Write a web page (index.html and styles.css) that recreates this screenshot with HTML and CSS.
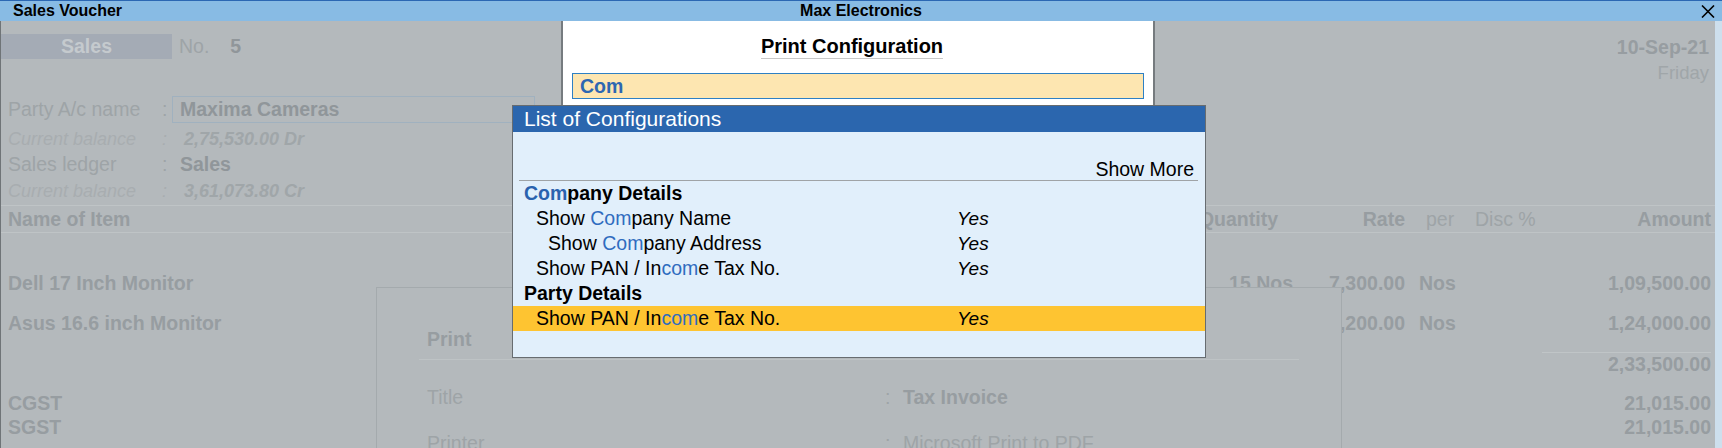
FILE: index.html
```html
<!DOCTYPE html>
<html lang="en">

<head>
    <meta charset="UTF-8">
    <meta name="viewport" content="width=device-width, initial-scale=1.0">
    <title>Sales Voucher</title>
    <link rel="stylesheet" href="styles.css">
</head>

<body>
    <div class="titlebar">
        <div class="title-left">Sales Voucher</div>
        <div class="title-center">Max Electronics</div>
        <div class="title-right">
            <svg class="close-icon" width="14" height="13" viewBox="0 0 14 13">
                <path d="M1 0.5 L13 12.5 M13 0.5 L1 12.5" stroke="#000" stroke-width="1.6" fill="none"/>
            </svg>
        </div>
    </div>

    <div class="screen">
        <div class="voucher">
            <div class="vch-top">
                <div class="vch-left">
                    <div class="vch-type">Sales</div>
                    <span class="vch-no-label">No.</span>
                    <span class="vch-no">5</span>
                </div>
                <div class="vch-date">
                    <div class="date">10-Sep-21</div>
                    <div class="day">Friday</div>
                </div>
            </div>

            <div class="ledgers">
                <div class="led-row row-party">
                    <span class="label">Party A/c name</span>
                    <span class="colon">:</span>
                    <span class="party-field">Maxima Cameras</span>
                </div>
                <div class="led-row row-bal">
                    <span class="label">Current balance</span>
                    <span class="colon">:</span>
                    <span class="bal-value">2,75,530.00 Dr</span>
                </div>
                <div class="led-row row-ledger">
                    <span class="label">Sales ledger</span>
                    <span class="colon">:</span>
                    <span class="value">Sales</span>
                </div>
                <div class="led-row row-bal2">
                    <span class="label">Current balance</span>
                    <span class="colon">:</span>
                    <span class="bal-value">3,61,073.80 Cr</span>
                </div>
            </div>

            <div class="items-head">
                <span class="col-name">Name of Item</span>
                <span class="col-qty">Quantity</span>
                <span class="col-rate">Rate</span>
                <span class="col-per">per</span>
                <span class="col-disc">Disc %</span>
                <span class="col-amt">Amount</span>
            </div>

            <div class="items">
                <div class="item-row">
                    <span class="col-name">Dell 17 Inch Monitor</span>
                    <span class="col-qty">15 Nos</span>
                    <span class="col-rate">7,300.00</span>
                    <span class="col-per">Nos</span>
                    <span class="col-disc"></span>
                    <span class="col-amt">1,09,500.00</span>
                </div>
                <div class="item-row">
                    <span class="col-name">Asus 16.6 inch Monitor</span>
                    <span class="col-qty">20 Nos</span>
                    <span class="col-rate">6,200.00</span>
                    <span class="col-per">Nos</span>
                    <span class="col-disc"></span>
                    <span class="col-amt">1,24,000.00</span>
                </div>
            </div>

            <div class="subtotal">2,33,500.00</div>

            <div class="taxes">
                <div class="tax-row">
                    <span>CGST</span>
                    <span>21,015.00</span>
                </div>
                <div class="tax-row">
                    <span>SGST</span>
                    <span>21,015.00</span>
                </div>
            </div>
        </div>
        <div class="side-strip"></div>

        <!-- print dialog behind the configuration popups -->
        <div class="print-dialog">
            <div class="pd-head">Print</div>
            <div class="pd-row pd-first">
                <span class="pd-label">Title</span>
                <span class="pd-colon">:</span>
                <span class="pd-value bold">Tax Invoice</span>
            </div>
            <div class="pd-row">
                <span class="pd-label">Printer</span>
                <span class="pd-colon">:</span>
                <span class="pd-value">Microsoft Print to PDF</span>
            </div>
        </div>

        <div class="config-panel">
            <div class="config-title"><span>Print Configuration</span></div>
            <div class="config-input">Com</div>
        </div>

        <div class="config-list">
            <div class="list-header">List of Configurations</div>
            <div class="list-body">
                <div class="show-more">Show More</div>
                <div class="list-row group"><span class="name"><b class="match">Com</b>pany Details</span><span></span></div>
                <div class="list-row lvl1"><span class="name">Show <span class="match">Com</span>pany Name</span><span class="yes">Yes</span></div>
                <div class="list-row lvl2"><span class="name">Show <span class="match">Com</span>pany Address</span><span class="yes">Yes</span></div>
                <div class="list-row lvl1"><span class="name">Show PAN / In<span class="match">com</span>e Tax No.</span><span class="yes">Yes</span></div>
                <div class="list-row group"><span class="name">Party Details</span><span></span></div>
                <div class="list-row lvl1 selected"><span class="name">Show PAN / In<span class="match">com</span>e Tax No.</span><span class="yes">Yes</span></div>
            </div>
        </div>
    </div>
</body>
</html>
```

FILE: styles.css
```css
:root {
    --screen-bg: #b4b9bc;
    --title-bg: #88bbe4;
    --title-border: #2b67b3;
    --faded-label: #9ea4a7;
    --faded-value: #90969a;
    --faded-italic: #a8adb0;
    --list-head: #2b66ae;
    --list-bg: #e1effb;
    --select-bg: #fec431;
    --match-blue: #2f6cbf;
}

* {
    box-sizing: border-box;
    margin: 0;
    padding: 0;
}

body {
    width: 1722px;
    height: 448px;
    overflow: hidden;
    font-family: "Liberation Sans", Arial, sans-serif;
    font-size: 19.5px;
    color: #000;
    background-color: var(--screen-bg);
}

/* title bar */
.titlebar {
    height: 21px;
    border-top: 1px solid var(--title-border);
    background-color: var(--title-bg);
    display: grid;
    grid-template-columns: 1fr auto 1fr;
    align-items: center;
    font-size: 16px;
    font-weight: bold;
    line-height: 20px;
}

.title-left {
    padding-left: 13px;
}

.title-center {
    text-align: center;
}

.title-right {
    display: flex;
    justify-content: flex-end;
    padding-right: 7px;
}

.close-icon {
    display: block;
}

/* main screen */
.screen {
    position: relative;
    height: 427px;
    display: flex;
    overflow: hidden;
}

.voucher {
    flex: 1;
    border-left: 1px solid #6f7477;
    padding-top: 13px;
    color: var(--faded-label);
}

.side-strip {
    width: 7px;
    background-color: #cddfed;
}

.vch-top {
    height: 62px;
    display: flex;
    justify-content: space-between;
    align-items: flex-start;
}

.vch-left {
    display: flex;
    align-items: center;
    height: 25px;
    line-height: 25px;
}

.vch-type {
    width: 171px;
    height: 25px;
    background-color: #a4abb5;
    color: #c5cace;
    font-weight: bold;
    text-align: center;
}

.vch-no-label {
    margin-left: 7px;
}

.vch-no {
    margin-left: 21px;
    font-weight: bold;
    color: var(--faded-value);
}

.vch-date {
    margin-right: 6px;
    text-align: right;
    line-height: 26px;
}

.date {
    font-weight: bold;
    color: #979da1;
}

.day {
    font-size: 18.5px;
    color: #a0a6a9;
}

/* ledger block */
.ledgers {
    padding-left: 7px;
}

.led-row {
    display: flex;
    align-items: center;
}

.led-row .label {
    width: 154px;
}

.led-row .colon {
    width: 10px;
}

.row-party {
    height: 27px;
}

.party-field {
    width: 363px;
    height: 27px;
    line-height: 25px;
    border: 1px solid #a0b1bf;
    padding-left: 7px;
    font-weight: bold;
    color: var(--faded-value);
}

.row-bal {
    height: 29px;
    padding-top: 3px;
}

.row-bal2 {
    height: 28px;
    padding-top: 3px;
}

.row-bal .label,
.row-bal2 .label,
.row-bal .colon,
.row-bal2 .colon {
    font-style: italic;
    font-size: 18px;
    color: var(--faded-italic);
}

.bal-value {
    padding-left: 12px;
    font-size: 18px;
    font-style: italic;
    font-weight: bold;
    color: #a0a6a9;
}

.row-ledger {
    height: 24px;
}

.row-ledger .value {
    padding-left: 8px;
    font-weight: bold;
    color: var(--faded-value);
}

/* item table */
.items-head,
.item-row {
    display: grid;
    grid-template-columns: 1fr 144px 111px 65px 90px 151px;
    padding: 0 4px 0 7px;
}

.items-head {
    margin-top: 1px;
    height: 28px;
    line-height: 26px;
    border-top: 1px solid #bfc4c6;
    border-bottom: 1px solid #bfc4c6;
}

.items-head .col-name,
.items-head .col-qty,
.items-head .col-rate,
.items-head .col-amt {
    font-weight: bold;
    color: #979da1;
}

.col-qty,
.col-rate,
.col-amt {
    text-align: right;
}

.items-head .col-qty {
    padding-right: 16px;
}

.items-head .col-per {
    padding-left: 21px;
}

.col-disc {
    padding-left: 5px;
}

.items {
    padding-top: 30px;
}

.item-row {
    height: 40px;
    line-height: 40px;
    font-weight: bold;
    color: #979da1;
}

.item-row .col-qty {
    padding-right: 1px;
}

.item-row .col-per {
    padding-left: 14px;
}

.subtotal {
    width: 169px;
    margin: 9px 4px 0 auto;
    height: 22px;
    line-height: 22px;
    border-top: 1px solid #c0c5c7;
    text-align: right;
    font-weight: bold;
    color: #979da1;
}

.taxes {
    padding: 17px 4px 0 7px;
}

.tax-row {
    display: flex;
    justify-content: space-between;
    height: 24px;
    line-height: 24px;
    font-weight: bold;
    color: #979da1;
}

/* faded print dialog, runs off the bottom of the screen */
.print-dialog {
    position: absolute;
    left: 376px;
    top: 266px;
    bottom: 0;
    width: 966px;
    overflow: hidden;
    border: 1px solid #a4aaad;
    border-bottom: none;
    background-color: var(--screen-bg);
    color: var(--faded-label);
}

.pd-head {
    margin-left: 42px;
    width: 880px;
    padding: 39px 0 0 8px;
    height: 72px;
    line-height: 24px;
    border-bottom: 1px solid #bec3c5;
    font-weight: bold;
    color: #979da1;
}

.pd-row {
    display: flex;
    height: 24px;
    line-height: 24px;
    margin-top: 22px;
    padding-left: 50px;
}

.pd-first {
    margin-top: 25px;
}

.pd-label {
    width: 458px;
}

.pd-colon {
    width: 18px;
}

.pd-value.bold {
    font-weight: bold;
    color: #979da1;
}

/* print configuration panel */
.config-panel {
    position: absolute;
    left: 561px;
    top: 0;
    width: 594px;
    height: 86px;
    background-color: #fff;
    border-left: 2px solid #767b7f;
    border-right: 2px solid #767b7f;
}

.config-title {
    padding: 13px 12px 0 0;
    text-align: center;
}

.config-title span {
    display: inline-block;
    height: 25px;
    line-height: 24px;
    font-size: 20px;
    font-weight: bold;
    border-bottom: 1px solid #c8c8c8;
}

.config-input {
    margin: 14px 0 0 9px;
    width: 572px;
    height: 26px;
    line-height: 24px;
    padding-left: 7px;
    border: 1px solid #2e80c4;
    background-color: #fde6b1;
    color: #2d67b2;
    font-weight: bold;
}

/* list of configurations popup */
.config-list {
    position: absolute;
    left: 512px;
    top: 84px;
    width: 694px;
    height: 253px;
    border: 1px solid #676c70;
    background-color: var(--list-bg);
}

.list-header {
    height: 26px;
    line-height: 26px;
    padding-left: 11px;
    background-color: var(--list-head);
    color: #fff;
    font-size: 21px;
}

.list-body {
    padding-top: 25px;
}

.show-more {
    height: 24px;
    line-height: 24px;
    margin: 0 7px 0 6px;
    padding-right: 4px;
    text-align: right;
    border-bottom: 1px solid #9fa3a6;
}

.list-row {
    display: grid;
    grid-template-columns: 444px 1fr;
    height: 25px;
    line-height: 25px;
}

.list-row.group .name {
    padding-left: 11px;
    font-weight: bold;
}

.list-row.lvl1 .name {
    padding-left: 23px;
}

.list-row.lvl2 .name {
    padding-left: 35px;
}

.list-row.selected {
    background-color: var(--select-bg);
}

.match {
    color: var(--match-blue);
}

b.match {
    color: #2a62ae;
}

.yes {
    font-style: italic;
    font-size: 19px;
}
```
